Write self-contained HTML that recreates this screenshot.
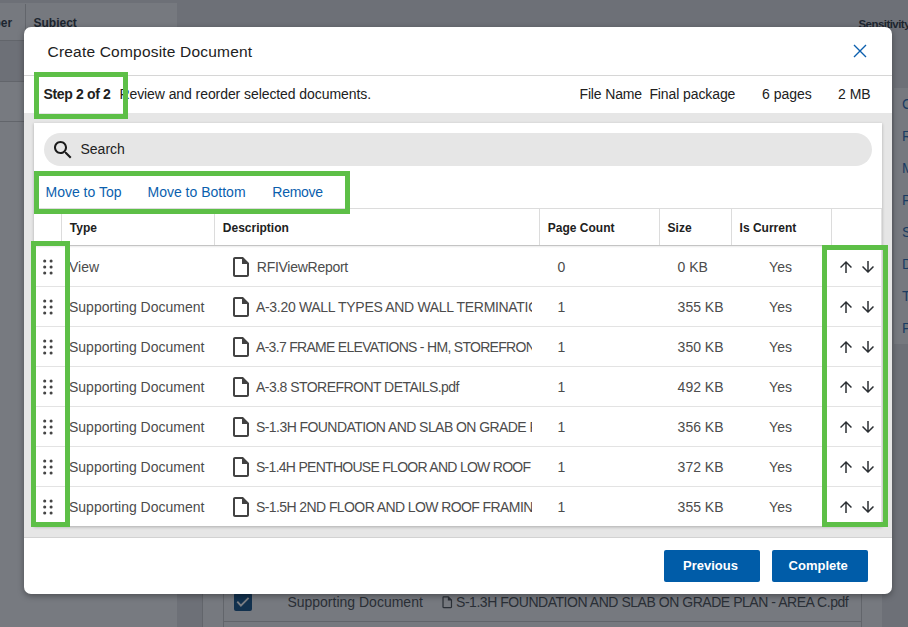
<!DOCTYPE html>
<html><head><meta charset="utf-8">
<style>
*{margin:0;padding:0;box-sizing:border-box}
html,body{width:908px;height:627px;overflow:hidden}
body{position:relative;background:#777a80;font-family:"Liberation Sans",sans-serif;color:#212121}
.a{position:absolute}
.t{position:absolute;white-space:nowrap;line-height:20px}
.g{position:absolute;border:5px solid #5dbf47}
</style></head><body>
<div class="a" style="left:0px;top:0px;width:908px;height:40px;background:#6d7077"></div>
<div class="a" style="left:0px;top:3px;width:177px;height:37px;background:#76797f"></div>
<div class="a" style="left:25px;top:4px;width:1px;height:36px;background:#62656b"></div>
<div class="a" style="left:0px;top:40px;width:24px;height:1px;background:#62656b"></div>
<div class="a" style="left:0px;top:41px;width:24px;height:40px;background:#6d7077"></div>
<div class="a" style="left:0px;top:81px;width:24px;height:1px;background:#62656b"></div>
<div class="a" style="left:0px;top:121px;width:24px;height:1px;background:#62656b"></div>
<div class="t" style="left:-6.50px;top:12.84px;font-size:12px;font-weight:700;color:#1d2630">ber</div>
<div class="t" style="left:33.50px;top:12.84px;font-size:12px;font-weight:700;color:#1d2630">Subject</div>
<div class="t" style="left:858.50px;top:14.02px;font-size:11.5px;font-weight:700;color:#1d2630;letter-spacing:-0.55px">Sensitivity</div>
<div class="a" style="left:892px;top:40px;width:16px;height:587px;background:#6d7077"></div>
<div class="a" style="left:894px;top:88px;width:14px;height:256px;background:#76797f"></div>
<div class="t" style="left:902.00px;top:94.15px;font-size:14px;color:#1b3c62">C</div>
<div class="t" style="left:902.00px;top:126.15px;font-size:14px;color:#1b3c62">R</div>
<div class="t" style="left:902.00px;top:158.15px;font-size:14px;color:#1b3c62">M</div>
<div class="t" style="left:902.00px;top:190.15px;font-size:14px;color:#1b3c62">P</div>
<div class="t" style="left:902.00px;top:222.15px;font-size:14px;color:#1b3c62">S</div>
<div class="t" style="left:902.00px;top:254.15px;font-size:14px;color:#1b3c62">D</div>
<div class="t" style="left:902.00px;top:286.15px;font-size:14px;color:#1b3c62">T</div>
<div class="t" style="left:902.00px;top:318.15px;font-size:14px;color:#1b3c62">P</div>
<div class="a" style="left:177px;top:560px;width:25px;height:67px;background:#6d7077"></div>
<div class="a" style="left:202px;top:560px;width:680px;height:67px;background:#76797f"></div>
<div class="a" style="left:202px;top:560px;width:1px;height:67px;background:#62656b"></div>
<div class="a" style="left:223px;top:560px;width:1px;height:67px;background:#62656b"></div>
<div class="a" style="left:861px;top:560px;width:1px;height:67px;background:#62656b"></div>
<div class="a" style="left:882px;top:560px;width:1px;height:67px;background:#62656b"></div>
<div class="a" style="left:882px;top:560px;width:26px;height:67px;background:#6d7077"></div>
<div class="a" style="left:223px;top:621px;width:638px;height:1px;background:#62656b"></div>
<div class="a" style="left:234px;top:593px;width:18px;height:18px;background:#12314e;border-radius:2px"></div>
<svg class="a" style="left:228px;top:590px" width="30" height="30" viewBox="0 0 30 30"><path d="M9.3 11.7L12.9 15.6L20.6 7.9" stroke="#7b7e84" stroke-width="1.9" fill="none"/></svg>
<div class="t" style="left:287.40px;top:592.15px;font-size:14px;color:#2a2f36">Supporting Document</div>
<svg class="a" style="left:439.6px;top:594.8px" width="14.5" height="14.5" viewBox="0 0 24 24"><path fill="#2a2f36" d="M14 2H6c-1.1 0-1.99.9-1.99 2L4 20c0 1.1.89 2 1.99 2H18c1.1 0 2-.9 2-2V8l-6-6zM6 20V4h7v5h5v11H6z"/></svg>
<div class="t" style="left:456.00px;top:592.15px;font-size:14px;color:#2a2f36;letter-spacing:-0.462px">S-1.3H FOUNDATION AND SLAB ON GRADE PLAN - AREA C.pdf</div>
<div id="modal" style="position:absolute;left:24px;top:27px;width:868px;height:567px;background:#fff;border-radius:7px;overflow:hidden;box-shadow:0 2px 6px rgba(0,0,0,.35)">
<div class="t" style="left:23.50px;top:15.23px;font-size:15.5px;color:#212121;letter-spacing:0.2px">Create Composite Document</div>
<svg class="a" style="left:829px;top:17px" width="14" height="14" viewBox="0 0 14 14"><path d="M1 1L13 13M13 1L1 13" stroke="#0b5fae" stroke-width="1.4" fill="none"/></svg>
<div class="a" style="left:0px;top:48px;width:868px;height:1px;background:#d6d6d6"></div>
<div class="t" style="left:19.50px;top:56.85px;font-size:14px;font-weight:700;color:#212121;letter-spacing:-0.35px">Step 2 of 2</div>
<div class="t" style="left:95.40px;top:56.85px;font-size:14px;color:#212121;letter-spacing:-0.076px">Review and reorder selected documents.</div>
<div class="t" style="left:555.50px;top:56.85px;font-size:14px;color:#212121;letter-spacing:-0.15px">File Name</div>
<div class="t" style="left:625.40px;top:56.85px;font-size:14px;color:#212121;letter-spacing:-0.1px">Final package</div>
<div class="t" style="left:738.00px;top:56.85px;font-size:14px;color:#212121">6 pages</div>
<div class="t" style="left:814.00px;top:56.85px;font-size:14px;color:#212121">2 MB</div>
<div class="a" style="left:0px;top:86px;width:868px;height:424px;background:#e6e6e6"></div>
<div class="a" style="left:0px;top:510px;width:868px;height:1px;background:#d2d2d2"></div>
<div class="a" style="left:10px;top:96px;width:848px;height:403px;background:#fff;box-shadow:0 1px 3px rgba(0,0,0,.25)"></div>
<div class="a" style="left:19.5px;top:106px;width:828.5px;height:33px;background:#e6e6e6;border-radius:16.5px"></div>
<svg class="a" style="left:27px;top:110.5px" width="24" height="24" viewBox="0 0 24 24"><path fill="#1b1b1b" d="M15.5 14h-.79l-.28-.27C15.41 12.59 16 11.11 16 9.5 16 5.91 13.09 3 9.5 3S3 5.91 3 9.5 5.91 16 9.5 16c1.61 0 3.09-.59 4.23-1.57l.27.28v.79l5 4.99L20.49 19l-4.99-5zm-6 0C7.01 14 5 11.99 5 9.5S7.01 5 9.5 5 14 7.01 14 9.5 11.99 14 9.5 14z"/></svg>
<div class="t" style="left:56.50px;top:112.15px;font-size:14px;color:#212121">Search</div>
<div class="t" style="left:21.50px;top:154.95px;font-size:14px;color:#0b5fae">Move to Top</div>
<div class="t" style="left:123.50px;top:154.95px;font-size:14px;color:#0b5fae">Move to Bottom</div>
<div class="t" style="left:248.30px;top:154.95px;font-size:14px;color:#0b5fae;letter-spacing:-0.28px">Remove</div>
<div class="a" style="left:10px;top:181px;width:848px;height:1px;background:#dcdcdc"></div>
<div class="a" style="left:10px;top:218px;width:848px;height:1px;background:#c4c4c4"></div>
<div class="a" style="left:10px;top:219px;width:848px;height:2px;background:linear-gradient(rgba(0,0,0,.08),rgba(0,0,0,0))"></div>
<div class="a" style="left:857px;top:182px;width:1px;height:317px;background:#e2e2e2"></div>
<div class="a" style="left:37px;top:182px;width:1px;height:36px;background:#dcdcdc"></div>
<div class="a" style="left:190px;top:182px;width:1px;height:36px;background:#dcdcdc"></div>
<div class="a" style="left:515px;top:182px;width:1px;height:36px;background:#dcdcdc"></div>
<div class="a" style="left:635px;top:182px;width:1px;height:36px;background:#dcdcdc"></div>
<div class="a" style="left:707px;top:182px;width:1px;height:36px;background:#dcdcdc"></div>
<div class="a" style="left:807px;top:182px;width:1px;height:36px;background:#dcdcdc"></div>
<div class="t" style="left:45.80px;top:191.04px;font-size:12px;font-weight:700;color:#212121">Type</div>
<div class="t" style="left:198.80px;top:191.04px;font-size:12px;font-weight:700;color:#212121">Description</div>
<div class="t" style="left:523.80px;top:191.04px;font-size:12px;font-weight:700;color:#212121">Page Count</div>
<div class="t" style="left:643.60px;top:191.04px;font-size:12px;font-weight:700;color:#212121">Size</div>
<div class="t" style="left:715.60px;top:191.04px;font-size:12px;font-weight:700;color:#212121">Is Current</div>
<div class="a" style="left:10px;top:259px;width:848px;height:1px;background:#e3e3e3"></div>
<svg class="a" style="left:12px;top:228px" width="24" height="24" viewBox="0 0 24 24"><g fill="#444"><circle cx="8.7" cy="6" r="1.55"/><circle cx="15.1" cy="6" r="1.55"/><circle cx="8.7" cy="12" r="1.55"/><circle cx="15.1" cy="12" r="1.55"/><circle cx="8.7" cy="18" r="1.55"/><circle cx="15.1" cy="18" r="1.55"/></g></svg>
<div class="t" style="left:45.00px;top:230.15px;font-size:14px;color:#4c4c4c">View</div>
<svg class="a" style="left:205px;top:228px" width="24" height="24" viewBox="0 0 24 24"><path fill="#424242" d="M14 2H6c-1.1 0-1.99.9-1.99 2L4 20c0 1.1.89 2 1.99 2H18c1.1 0 2-.9 2-2V8l-6-6zM6 20V4h7v5h5v11H6z"/></svg>
<div class="a" style="left:226px;top:224px;width:282px;height:30px;overflow:hidden"><div class="t" style="left:6.80px;top:6.15px;font-size:14px;color:#4c4c4c;letter-spacing:-0.267px">RFIViewReport</div></div>
<div class="t" style="left:533.50px;top:230.15px;font-size:14px;color:#4c4c4c">0</div>
<div class="t" style="left:653.60px;top:230.15px;font-size:14px;color:#4c4c4c">0 KB</div>
<div class="t" style="left:745.10px;top:230.15px;font-size:14px;color:#4c4c4c">Yes</div>
<svg class="a" style="left:813px;top:231px" width="18" height="18" viewBox="0 0 24 24"><path fill="#2b2f33" d="M4 12l1.41 1.41L11 7.83V20h2V7.83l5.58 5.59L20 12l-8-8-8 8z"/></svg>
<svg class="a" style="left:835px;top:231px" width="18" height="18" viewBox="0 0 24 24"><path fill="#2b2f33" transform="rotate(180 12 12)" d="M4 12l1.41 1.41L11 7.83V20h2V7.83l5.58 5.59L20 12l-8-8-8 8z"/></svg>
<div class="a" style="left:10px;top:299px;width:848px;height:1px;background:#e3e3e3"></div>
<svg class="a" style="left:12px;top:268px" width="24" height="24" viewBox="0 0 24 24"><g fill="#444"><circle cx="8.7" cy="6" r="1.55"/><circle cx="15.1" cy="6" r="1.55"/><circle cx="8.7" cy="12" r="1.55"/><circle cx="15.1" cy="12" r="1.55"/><circle cx="8.7" cy="18" r="1.55"/><circle cx="15.1" cy="18" r="1.55"/></g></svg>
<div class="t" style="left:45.00px;top:270.15px;font-size:14px;color:#4c4c4c">Supporting Document</div>
<svg class="a" style="left:205px;top:268px" width="24" height="24" viewBox="0 0 24 24"><path fill="#424242" d="M14 2H6c-1.1 0-1.99.9-1.99 2L4 20c0 1.1.89 2 1.99 2H18c1.1 0 2-.9 2-2V8l-6-6zM6 20V4h7v5h5v11H6z"/></svg>
<div class="a" style="left:226px;top:264px;width:282px;height:30px;overflow:hidden"><div class="t" style="left:6.00px;top:6.15px;font-size:14px;color:#4c4c4c;letter-spacing:-0.314px">A-3.20 WALL TYPES AND WALL TERMINATIONS.pdf</div></div>
<div class="t" style="left:533.50px;top:270.15px;font-size:14px;color:#4c4c4c">1</div>
<div class="t" style="left:653.60px;top:270.15px;font-size:14px;color:#4c4c4c">355 KB</div>
<div class="t" style="left:745.10px;top:270.15px;font-size:14px;color:#4c4c4c">Yes</div>
<svg class="a" style="left:813px;top:271px" width="18" height="18" viewBox="0 0 24 24"><path fill="#2b2f33" d="M4 12l1.41 1.41L11 7.83V20h2V7.83l5.58 5.59L20 12l-8-8-8 8z"/></svg>
<svg class="a" style="left:835px;top:271px" width="18" height="18" viewBox="0 0 24 24"><path fill="#2b2f33" transform="rotate(180 12 12)" d="M4 12l1.41 1.41L11 7.83V20h2V7.83l5.58 5.59L20 12l-8-8-8 8z"/></svg>
<div class="a" style="left:10px;top:339px;width:848px;height:1px;background:#e3e3e3"></div>
<svg class="a" style="left:12px;top:308px" width="24" height="24" viewBox="0 0 24 24"><g fill="#444"><circle cx="8.7" cy="6" r="1.55"/><circle cx="15.1" cy="6" r="1.55"/><circle cx="8.7" cy="12" r="1.55"/><circle cx="15.1" cy="12" r="1.55"/><circle cx="8.7" cy="18" r="1.55"/><circle cx="15.1" cy="18" r="1.55"/></g></svg>
<div class="t" style="left:45.00px;top:310.15px;font-size:14px;color:#4c4c4c">Supporting Document</div>
<svg class="a" style="left:205px;top:308px" width="24" height="24" viewBox="0 0 24 24"><path fill="#424242" d="M14 2H6c-1.1 0-1.99.9-1.99 2L4 20c0 1.1.89 2 1.99 2H18c1.1 0 2-.9 2-2V8l-6-6zM6 20V4h7v5h5v11H6z"/></svg>
<div class="a" style="left:226px;top:304px;width:282px;height:30px;overflow:hidden"><div class="t" style="left:6.00px;top:6.15px;font-size:14px;color:#4c4c4c;letter-spacing:-0.7px">A-3.7 FRAME ELEVATIONS - HM, STOREFRONT AND CURTAINWALL.pdf</div></div>
<div class="t" style="left:533.50px;top:310.15px;font-size:14px;color:#4c4c4c">1</div>
<div class="t" style="left:653.60px;top:310.15px;font-size:14px;color:#4c4c4c">350 KB</div>
<div class="t" style="left:745.10px;top:310.15px;font-size:14px;color:#4c4c4c">Yes</div>
<svg class="a" style="left:813px;top:311px" width="18" height="18" viewBox="0 0 24 24"><path fill="#2b2f33" d="M4 12l1.41 1.41L11 7.83V20h2V7.83l5.58 5.59L20 12l-8-8-8 8z"/></svg>
<svg class="a" style="left:835px;top:311px" width="18" height="18" viewBox="0 0 24 24"><path fill="#2b2f33" transform="rotate(180 12 12)" d="M4 12l1.41 1.41L11 7.83V20h2V7.83l5.58 5.59L20 12l-8-8-8 8z"/></svg>
<div class="a" style="left:10px;top:379px;width:848px;height:1px;background:#e3e3e3"></div>
<svg class="a" style="left:12px;top:348px" width="24" height="24" viewBox="0 0 24 24"><g fill="#444"><circle cx="8.7" cy="6" r="1.55"/><circle cx="15.1" cy="6" r="1.55"/><circle cx="8.7" cy="12" r="1.55"/><circle cx="15.1" cy="12" r="1.55"/><circle cx="8.7" cy="18" r="1.55"/><circle cx="15.1" cy="18" r="1.55"/></g></svg>
<div class="t" style="left:45.00px;top:350.15px;font-size:14px;color:#4c4c4c">Supporting Document</div>
<svg class="a" style="left:205px;top:348px" width="24" height="24" viewBox="0 0 24 24"><path fill="#424242" d="M14 2H6c-1.1 0-1.99.9-1.99 2L4 20c0 1.1.89 2 1.99 2H18c1.1 0 2-.9 2-2V8l-6-6zM6 20V4h7v5h5v11H6z"/></svg>
<div class="a" style="left:226px;top:344px;width:282px;height:30px;overflow:hidden"><div class="t" style="left:6.00px;top:6.15px;font-size:14px;color:#4c4c4c;letter-spacing:-0.533px">A-3.8 STOREFRONT DETAILS.pdf</div></div>
<div class="t" style="left:533.50px;top:350.15px;font-size:14px;color:#4c4c4c">1</div>
<div class="t" style="left:653.60px;top:350.15px;font-size:14px;color:#4c4c4c">492 KB</div>
<div class="t" style="left:745.10px;top:350.15px;font-size:14px;color:#4c4c4c">Yes</div>
<svg class="a" style="left:813px;top:351px" width="18" height="18" viewBox="0 0 24 24"><path fill="#2b2f33" d="M4 12l1.41 1.41L11 7.83V20h2V7.83l5.58 5.59L20 12l-8-8-8 8z"/></svg>
<svg class="a" style="left:835px;top:351px" width="18" height="18" viewBox="0 0 24 24"><path fill="#2b2f33" transform="rotate(180 12 12)" d="M4 12l1.41 1.41L11 7.83V20h2V7.83l5.58 5.59L20 12l-8-8-8 8z"/></svg>
<div class="a" style="left:10px;top:419px;width:848px;height:1px;background:#e3e3e3"></div>
<svg class="a" style="left:12px;top:388px" width="24" height="24" viewBox="0 0 24 24"><g fill="#444"><circle cx="8.7" cy="6" r="1.55"/><circle cx="15.1" cy="6" r="1.55"/><circle cx="8.7" cy="12" r="1.55"/><circle cx="15.1" cy="12" r="1.55"/><circle cx="8.7" cy="18" r="1.55"/><circle cx="15.1" cy="18" r="1.55"/></g></svg>
<div class="t" style="left:45.00px;top:390.15px;font-size:14px;color:#4c4c4c">Supporting Document</div>
<svg class="a" style="left:205px;top:388px" width="24" height="24" viewBox="0 0 24 24"><path fill="#424242" d="M14 2H6c-1.1 0-1.99.9-1.99 2L4 20c0 1.1.89 2 1.99 2H18c1.1 0 2-.9 2-2V8l-6-6zM6 20V4h7v5h5v11H6z"/></svg>
<div class="a" style="left:226px;top:384px;width:282px;height:30px;overflow:hidden"><div class="t" style="left:6.00px;top:6.15px;font-size:14px;color:#4c4c4c;letter-spacing:-0.565px">S-1.3H FOUNDATION AND SLAB ON GRADE PLAN - AREA C.pdf</div></div>
<div class="t" style="left:533.50px;top:390.15px;font-size:14px;color:#4c4c4c">1</div>
<div class="t" style="left:653.60px;top:390.15px;font-size:14px;color:#4c4c4c">356 KB</div>
<div class="t" style="left:745.10px;top:390.15px;font-size:14px;color:#4c4c4c">Yes</div>
<svg class="a" style="left:813px;top:391px" width="18" height="18" viewBox="0 0 24 24"><path fill="#2b2f33" d="M4 12l1.41 1.41L11 7.83V20h2V7.83l5.58 5.59L20 12l-8-8-8 8z"/></svg>
<svg class="a" style="left:835px;top:391px" width="18" height="18" viewBox="0 0 24 24"><path fill="#2b2f33" transform="rotate(180 12 12)" d="M4 12l1.41 1.41L11 7.83V20h2V7.83l5.58 5.59L20 12l-8-8-8 8z"/></svg>
<div class="a" style="left:10px;top:459px;width:848px;height:1px;background:#e3e3e3"></div>
<svg class="a" style="left:12px;top:428px" width="24" height="24" viewBox="0 0 24 24"><g fill="#444"><circle cx="8.7" cy="6" r="1.55"/><circle cx="15.1" cy="6" r="1.55"/><circle cx="8.7" cy="12" r="1.55"/><circle cx="15.1" cy="12" r="1.55"/><circle cx="8.7" cy="18" r="1.55"/><circle cx="15.1" cy="18" r="1.55"/></g></svg>
<div class="t" style="left:45.00px;top:430.15px;font-size:14px;color:#4c4c4c">Supporting Document</div>
<svg class="a" style="left:205px;top:428px" width="24" height="24" viewBox="0 0 24 24"><path fill="#424242" d="M14 2H6c-1.1 0-1.99.9-1.99 2L4 20c0 1.1.89 2 1.99 2H18c1.1 0 2-.9 2-2V8l-6-6zM6 20V4h7v5h5v11H6z"/></svg>
<div class="a" style="left:226px;top:424px;width:282px;height:30px;overflow:hidden"><div class="t" style="left:6.00px;top:6.15px;font-size:14px;color:#4c4c4c;letter-spacing:-0.718px">S-1.4H PENTHOUSE FLOOR AND LOW ROOF FRAMING PLAN.pdf</div></div>
<div class="t" style="left:533.50px;top:430.15px;font-size:14px;color:#4c4c4c">1</div>
<div class="t" style="left:653.60px;top:430.15px;font-size:14px;color:#4c4c4c">372 KB</div>
<div class="t" style="left:745.10px;top:430.15px;font-size:14px;color:#4c4c4c">Yes</div>
<svg class="a" style="left:813px;top:431px" width="18" height="18" viewBox="0 0 24 24"><path fill="#2b2f33" d="M4 12l1.41 1.41L11 7.83V20h2V7.83l5.58 5.59L20 12l-8-8-8 8z"/></svg>
<svg class="a" style="left:835px;top:431px" width="18" height="18" viewBox="0 0 24 24"><path fill="#2b2f33" transform="rotate(180 12 12)" d="M4 12l1.41 1.41L11 7.83V20h2V7.83l5.58 5.59L20 12l-8-8-8 8z"/></svg>
<svg class="a" style="left:12px;top:468px" width="24" height="24" viewBox="0 0 24 24"><g fill="#444"><circle cx="8.7" cy="6" r="1.55"/><circle cx="15.1" cy="6" r="1.55"/><circle cx="8.7" cy="12" r="1.55"/><circle cx="15.1" cy="12" r="1.55"/><circle cx="8.7" cy="18" r="1.55"/><circle cx="15.1" cy="18" r="1.55"/></g></svg>
<div class="t" style="left:45.00px;top:470.15px;font-size:14px;color:#4c4c4c">Supporting Document</div>
<svg class="a" style="left:205px;top:468px" width="24" height="24" viewBox="0 0 24 24"><path fill="#424242" d="M14 2H6c-1.1 0-1.99.9-1.99 2L4 20c0 1.1.89 2 1.99 2H18c1.1 0 2-.9 2-2V8l-6-6zM6 20V4h7v5h5v11H6z"/></svg>
<div class="a" style="left:226px;top:464px;width:282px;height:30px;overflow:hidden"><div class="t" style="left:6.00px;top:6.15px;font-size:14px;color:#4c4c4c;letter-spacing:-0.589px">S-1.5H 2ND FLOOR AND LOW ROOF FRAMING PLAN.pdf</div></div>
<div class="t" style="left:533.50px;top:470.15px;font-size:14px;color:#4c4c4c">1</div>
<div class="t" style="left:653.60px;top:470.15px;font-size:14px;color:#4c4c4c">355 KB</div>
<div class="t" style="left:745.10px;top:470.15px;font-size:14px;color:#4c4c4c">Yes</div>
<svg class="a" style="left:813px;top:471px" width="18" height="18" viewBox="0 0 24 24"><path fill="#2b2f33" d="M4 12l1.41 1.41L11 7.83V20h2V7.83l5.58 5.59L20 12l-8-8-8 8z"/></svg>
<svg class="a" style="left:835px;top:471px" width="18" height="18" viewBox="0 0 24 24"><path fill="#2b2f33" transform="rotate(180 12 12)" d="M4 12l1.41 1.41L11 7.83V20h2V7.83l5.58 5.59L20 12l-8-8-8 8z"/></svg>
<div class="g" style="left:10px;top:45px;width:94px;height:47px"></div>
<div class="g" style="left:10px;top:144px;width:316px;height:42.5px"></div>
<div class="g" style="left:7px;top:214px;width:39px;height:286px"></div>
<div class="g" style="left:798px;top:218px;width:66px;height:282px"></div>
<div class="a" style="left:640px;top:523px;width:96px;height:32px;background:#005ca8;border-radius:2px"></div>
<div class="t" style="left:659.00px;top:529.20px;font-size:13px;font-weight:700;color:#fff">Previous</div>
<div class="a" style="left:748px;top:523px;width:96px;height:32px;background:#005ca8;border-radius:2px"></div>
<div class="t" style="left:764.60px;top:529.20px;font-size:13px;font-weight:700;color:#fff">Complete</div>
</div>
</body></html>
